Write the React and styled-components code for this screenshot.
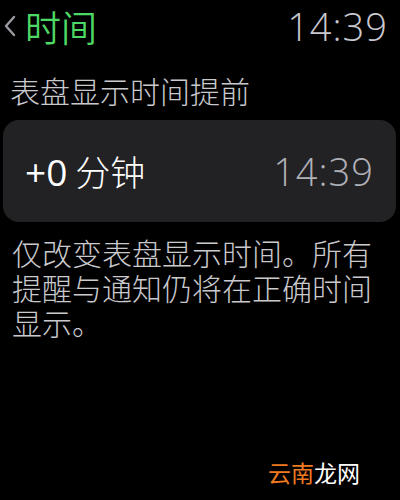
import React from "react";
import styled, { createGlobalStyle } from "styled-components";

const Global = createGlobalStyle`
  html, body { margin: 0; padding: 0; background: #000; }
  body { width: 400px; height: 500px; overflow: hidden; }
`;

const Screen = styled.div`
  position: relative;
  width: 400px;
  height: 500px;
  background: #000;
  display: flex;
  flex-direction: column;
  font-family: "Noto Sans CJK SC", "Noto Sans", sans-serif;
  font-weight: 300;
  box-sizing: border-box;
`;

const Header = styled.div`
  display: flex;
  align-items: center;
  justify-content: space-between;
  height: 48px;
  box-sizing: border-box;
  padding: 4px 12px 0 3px;
`;

const Back = styled.div`
  display: flex;
  align-items: center;
  gap: 9px;
`;

const Title = styled.span`
  color: #4cd964;
  font-size: 36px;
  font-weight: 350;
  line-height: 44px;
`;

const Clock = styled.span`
  color: ${(p) => p.$color};
  font-family: "Open Sans", "Noto Sans", sans-serif;
  font-weight: 300;
  font-size: ${(p) => p.$size}px;
  line-height: 44px;
  letter-spacing: 1px;
`;

const Subtitle = styled.div`
  color: #c9c9ce;
  font-size: 30px;
  line-height: 40px;
  padding: 22px 0 0 10px;
  margin-bottom: 10px;
`;

const Card = styled.div`
  margin: 0 4px 0 3px;
  height: 102px;
  border-radius: 16px;
  background: #222224;
  display: flex;
  align-items: center;
  justify-content: space-between;
  padding: 0 22px 0 22px;
`;

const Value = styled.span`
  color: #fff;
  font-size: 35px;
  display: flex;
  align-items: baseline;
  gap: 8px;
`;

const Num = styled.span`
  font-family: "Open Sans", "Noto Sans", sans-serif;
  font-weight: 400;
  font-size: 37px;
`;

const Desc = styled.p`
  margin: 0;
  padding: 13px 14px 0 12px;
  color: #c9c9ce;
  font-size: 30px;
  line-height: 35px;
`;

const Watermark = styled.div`
  position: absolute;
  left: 268px;
  top: 456px;
  font-size: 23px;
  line-height: 32px;
  font-weight: 400;
  color: #fff;
`;

const Orange = styled.span`
  color: #f07a20;
`;

function Chevron() {
  return (
    <svg width="13" height="22" viewBox="0 0 13 22">
      <path d="M11 2 L3 11 L11 20" fill="none" stroke="#9a9aa0" strokeWidth="2.4" strokeLinecap="round" strokeLinejoin="round" />
    </svg>
  );
}

export default function App() {
  return (
    <>
      <Global />
      <Screen>
        <Header>
          <Back>
            <Chevron />
            <Title>时间</Title>
          </Back>
          <Clock $color="#c8c8d0" $size={38}>14:39</Clock>
        </Header>
        <Subtitle>表盘显示时间提前</Subtitle>
        <Card>
          <Value>
            <Num>+0</Num>
            <span>分钟</span>
          </Value>
          <Clock $color="#b0b0b8" $size={38}>14:39</Clock>
        </Card>
        <Desc>仅改变表盘显示时间。所有提醒与通知仍将在正确时间显示。</Desc>
        <Watermark>
          <Orange>云南</Orange>龙网
        </Watermark>
      </Screen>
    </>
  );
}
